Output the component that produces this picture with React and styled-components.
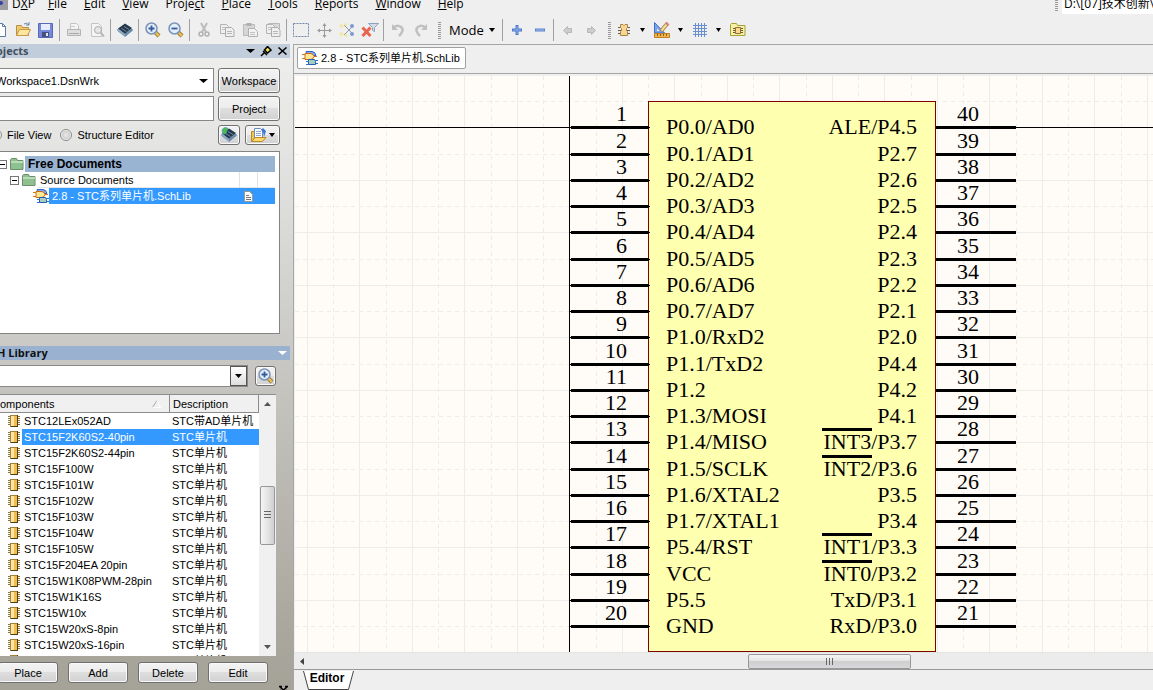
import React from "react";
import styled, { createGlobalStyle, css } from "styled-components";

const Global = createGlobalStyle`
  * { box-sizing: border-box; }
  html, body { margin: 0; height: 100%; }
  body {
    overflow: hidden;
    background: #efefef;
    color: #000;
    font: 11px/16px "Liberation Sans", "Noto Sans CJK SC", sans-serif;
  }
  button, input, select { font: inherit; color: inherit; margin: 0; }
  svg { display: block; flex: none; }
`;

const Page = styled.div`
  display: flex;
  flex-direction: column;
  height: 100vh;
  overflow: hidden;
`;

/* ---------- menu and toolbar ---------- */

const MenuBar = styled.nav`
  display: flex;
  flex: none;
  height: 18px;
  overflow: hidden;
  font: 12px/18px "Open Sans", "Noto Sans CJK SC", sans-serif;
`;

const AppBadge = styled.span`
  display: flex;
  width: 8px;
  height: 10px;
  background: #9d9ca2;
  margin-right: 4px;
`;

const MenuList = styled.div`
  display: flex;
  flex: 1;
  gap: 17px;
  margin-top: -5px;
`;

const MenuItem = styled.button`
  border: 0;
  padding: 0;
  background: none;
  height: 18px;
  white-space: nowrap;
  &:first-child { margin-right: -4px; }
`;

const PathBox = styled.input`
  width: 91px;
  height: 22px;
  margin: -8px 0 0 3px;
  padding: 0 0 0 2px;
  border: 0;
  background: #fff;
`;

const Toolbar = styled.div`
  display: flex;
  flex: none;
  align-items: center;
  height: 26px;
  padding-bottom: 2px;
  margin-left: -12px;
`;

const ToolButton = styled.button`
  display: flex;
  flex: none;
  align-items: center;
  justify-content: center;
  width: 23px;
  height: 22px;
  padding: 0;
  border: 0;
  background: none;
`;

const CaretButton = styled(ToolButton)`
  width: 15px;
`;

const ModeButton = styled.button`
  display: flex;
  align-items: center;
  gap: 5px;
  width: 58px;
  padding: 0 0 0 7px;
  border: 0;
  background: none;
  font: 13px/18px "Open Sans", sans-serif;
`;

const Separator = styled.span`
  flex: none;
  width: 1px;
  height: 22px;
  margin: 0 2px;
  background: #a0a0a0;
`;

const Grip = styled.span`
  flex: none;
  width: 3px;
  height: ${(p) => p.$h || 17}px;
  margin: 0 1px 0 6px;
  background: repeating-linear-gradient(#999 0 1px, #efefef 1px 2px);
`;

/* ---------- side panels ---------- */

const Body = styled.div`
  display: flex;
  flex: 1;
  min-height: 0;
`;

const Side = styled.aside`
  display: flex;
  flex-direction: column;
  flex: none;
  width: 303px;
  margin-left: -10px;
  padding-right: 3px;
  background: linear-gradient(#efefee, #dededc 24%, #c9c8c4 48%, #aaa79e 90%, #a5a298);
`;

const PanelHeader = styled.header`
  display: flex;
  flex: none;
  align-items: center;
  height: 14px;
  padding: 0 0 0 ${(p) => (p.$active ? 7 : 6)}px;
  background: ${(p) => (p.$active ? "#9ab2cf" : "#c1cddb")};
  color: ${(p) => (p.$active ? "#111" : "#42505e")};
  font: bold 11px/14px "Open Sans", sans-serif;
`;

const PanelTitle = styled.h2`
  flex: 1;
  margin: 0;
  font: inherit;
`;

const HeaderButton = styled.button`
  display: flex;
  justify-content: center;
  width: 16px;
  padding: 0;
  border: 0;
  background: none;
`;

const PanelBody = styled.section`
  display: flex;
  flex-direction: column;
  ${(p) => (p.$fill ? css`flex: 1; min-height: 0; padding: 5px 0 7px;` : css`flex: none; padding: 10px 0 12px;`)}
`;

const FieldRow = styled.div`
  display: flex;
  align-items: center;
  gap: ${(p) => p.$gap || 4}px;
  padding-right: ${(p) => p.$right || 10}px;
  padding-left: ${(p) => p.$left || 0}px;
  margin-bottom: ${(p) => p.$below || 0}px;
`;

const SelectWrap = styled.label`
  position: relative;
  display: flex;
  flex: 1;
`;

const fieldBox = css`
  flex: 1;
  width: 100%;
  min-width: 0;
  height: ${(p) => p.$h || 25}px;
  padding: 0 5px;
  border: 1px solid #888;
  border-radius: 0;
  background: #fff;
`;

const Select = styled.select`
  ${fieldBox}
  appearance: none;
`;

const TextBox = styled.input`
  ${fieldBox}
`;

const DropMark = styled.span`
  position: absolute;
  right: 1px;
  top: 1px;
  bottom: 1px;
  display: flex;
  align-items: center;
  justify-content: center;
  width: ${(p) => (p.$boxed ? 17 : 19)}px;
  pointer-events: none;
  ${(p) => p.$boxed && css`border: 1px solid #555; background: linear-gradient(#fff, #ddd);`}
`;

const PushButton = styled.button`
  display: flex;
  flex: none;
  align-items: center;
  justify-content: center;
  gap: 2px;
  width: ${(p) => p.$w}px;
  height: ${(p) => p.$h || 21}px;
  padding: 0;
  border: 1px solid #707070;
  border-radius: 3px;
  box-shadow: inset 0 0 0 1px #fafafa;
  background: linear-gradient(#f3f3f3, #ececec 49%, #dedede 50%, #d2d2d2);
`;

const ViewChoices = styled.div`
  display: flex;
  flex: 1;
  gap: 9px;
`;

const RadioLabel = styled.label`
  display: flex;
  align-items: center;
  gap: 5px;
  white-space: nowrap;
`;

const Radio = styled.input`
  appearance: none;
  width: 12px;
  height: 12px;
  border: 1px solid #8a8a8a;
  border-radius: 50%;
  background: radial-gradient(#e2e2e2 20%, #cfcfcf 50%, #f8f8f8 70%);
`;

const Grow = styled.span`
  flex: 1;
`;

const Tree = styled.ul`
  height: 183px;
  margin: 0 10px 0 0;
  padding: 4px 4px 0 7px;
  list-style: none;
  background: #fff;
  border: 1px solid #848484;
`;

const TreeRow = styled.li`
  display: flex;
  align-items: center;
  height: 16px;
  gap: ${(p) => (p.$level === 2 ? 0 : 1)}px;
  padding-left: ${(p) => [0, 12, 35][p.$level]}px;
`;

const TreeLabel = styled.span`
  display: flex;
  flex: 1;
  align-items: center;
  height: 16px;
  padding-left: 3px;
  white-space: nowrap;
  ${(p) => p.$kind === "root" && css`background: #99b3d2; font-size: 12px; font-weight: bold;`}
  ${(p) => p.$kind === "selected" && css`background: #3399ff; color: #fff;`}
  ${(p) => p.$kind === "group" && css`border-bottom: 1px solid #e6e6e6;`}
`;

const TreeCell = styled.span`
  display: flex;
  align-items: center;
  justify-content: center;
  width: 18px;
  height: 16px;
  border-left: 1px solid ${(p) => (p.$plain ? "transparent" : "#e2e2e2")};
`;

const ListFrame = styled.div`
  display: flex;
  flex: 1;
  min-height: 0;
  margin: 0 14px 6px 0;
  overflow: hidden;
  border-top: 1px solid #8c8c8c;
  background: #fff;
`;

const ListClip = styled.div`
  flex: 1;
  overflow: hidden;
`;

const Table = styled.table`
  width: 100%;
  table-layout: fixed;
  border-collapse: separate;
  border-spacing: 0;
`;

const Th = styled.th`
  height: 18px;
  padding: 0 8px 0 ${(p) => p.$pad}px;
  text-align: left;
  font-weight: normal;
  background: #f0f0f0;
  border-right: 1px solid #8c8c8c;
  border-bottom: 1px solid #8c8c8c;
`;

const ThInner = styled.span`
  display: flex;
  align-items: center;
  justify-content: space-between;
`;

const Td = styled.td`
  height: 16px;
  line-height: 16px;
  padding: 0 0 0 ${(p) => p.$pad || 2}px;
  overflow: hidden;
  white-space: nowrap;
  ${(p) => p.$on && css`background: #3399ff; color: #fff;`}
`;

const VScroll = styled.div`
  display: flex;
  flex-direction: column;
  align-items: center;
  flex: none;
  width: 17px;
  padding: 7px 0;
  background: #f0f0f0;
`;

const VThumb = styled.div`
  display: flex;
  align-items: center;
  justify-content: center;
  width: 15px;
  height: 59px;
  border: 1px solid #979797;
  border-radius: 2px;
  background: linear-gradient(90deg, #f5f5f5, #e4e4e4 50%, #cfcfd2);
`;

const Spacer = styled.div`
  flex: ${(p) => p.$n};
`;

const Corner = styled.div`
  align-self: flex-end;
  height: 0;
  margin-right: 2px;
`;

/* ---------- editor ---------- */

const Editor = styled.main`
  display: flex;
  flex: 1;
  flex-direction: column;
  min-width: 0;
  border-top: 1px solid #a6a6a6;
  border-left: 1px solid #a6a6a6;
`;

const TabBar = styled.div`
  display: flex;
  flex: none;
  height: 29px;
  padding: 2px 3px 4px;
  border-bottom: 1px solid #a6a6a6;
`;

const DocTab = styled.button`
  display: flex;
  align-items: center;
  gap: 3px;
  width: 169px;
  padding: 0 0 0 4px;
  border: 1px solid #a0a0a0;
  border-radius: 2px;
  background: #fff;
  white-space: nowrap;
`;

const Sheet = styled.div`
  flex: 1;
  min-height: 0;
  margin: 2px 0 0 1px;
  overflow: hidden;
  background: #fffcf7;
`;

const HScroll = styled.div`
  display: flex;
  flex: none;
  align-items: center;
  height: 17px;
  padding-left: 6px;
  background: #ececec;
  border-top: 1px solid #e2e6e4;
`;

const HThumb = styled.div`
  display: flex;
  align-items: center;
  justify-content: center;
  width: 163px;
  height: 15px;
  border: 1px solid #979797;
  border-radius: 2px;
  background: linear-gradient(#f5f5f5, #e2e2e2 49%, #cfcfd2 50%, #d8d8da);
`;

const Footer = styled.footer`
  flex: none;
  height: 21px;
  padding-left: 9px;
  border-top: 1px solid #999;
`;

const EditorTab = styled.button`
  position: relative;
  z-index: 0;
  width: 52px;
  height: 19px;
  padding: 0 4px 4px 0;
  border: 0;
  background: none;
  font-size: 12px;
  font-weight: bold;
  line-height: 14px;
  svg { position: absolute; left: 0; top: 0; z-index: -1; }
`;

/* ---------- icons ---------- */

const Svg = ({ w = 16, h = 16, children }) => (
  <svg width={w} height={h} viewBox={`0 0 ${w} ${h}`} fill="none" aria-hidden="true">
    {children}
  </svg>
);

const Down = ({ color = "#000", w = 7 }) => (
  <Svg w={w} h={4}>
    <path d={`M0 0H${w}L${w / 2} 4Z`} fill={color} />
  </Svg>
);

const Lens = ({ minus }) => (
  <Svg>
    <path d="M10 10l4 4" stroke="#7b6a3c" strokeWidth="4" />
    <path d="M10.500 10.500l3.500 3.500" stroke="#eebc4d" strokeWidth="2.500" />
    <circle cx="6.500" cy="6.500" r="5.500" fill="#e3eefb" stroke="#7b93b8" strokeWidth="1.500" />
    <path d={minus ? "M3.500 6.500h6" : "M3.500 6.500h6M6.500 3.500v6"} stroke="#365a9c" strokeWidth="1.800" />
  </Svg>
);

const Gate = () => (
  <Svg>
    <path d="M4 1.500h6q3 0 4 4H5z" fill="#7fa9f0" stroke="#3465c4" />
    <path d="M0 4.500h4M0 8.500h4M12 6.500h3" stroke="#d9771a" />
    <path d="M3 3.500h6q3 1 3 3t-3 3H3z" fill="#ffe794" stroke="#cf6a10" />
    <path d="M6.500 9.500h6l1 2v3h-7z" fill="#a5cfbd" stroke="#2b5cab" />
    <path d="M13 10.500h3M13.500 13.500h2.500M4 11.500h3M4 14.500h3" stroke="#2b6fe0" />
  </Svg>
);

const Chip = () => (
  <Svg w={12} h={14}>
    <path d="M0 2.500h12M0 4.500h12M0 6.500h12M0 8.500h12M0 10.500h12" stroke="#8a7440" />
    <rect x="2.500" y="1.500" width="7" height="11" fill="#f2bd4c" stroke="#a58238" />
    <rect x="3" y="2" width="3" height="10" fill="#fde5a2" />
    <path d="M9.500 1v12M3 12.500h6" stroke="#4d3a12" />
  </Svg>
);

const ToolChip = () => (
  <Svg>
    <path d="M2 5.500h12M2 8.500h12M2 11.500h12" stroke="#6c5b41" />
    <path d="M4.500 2.500h2.500l1 1 1-1h2.500v3l-1 1v2l1 1v4h-7v-4l1-1v-2l-1-1z" fill="#f7d690" stroke="#a8854a" />
  </Svg>
);

const Folder = () => (
  <Svg w={14} h={12}>
    <path d="M.5 11.500v-10l1-1h5l1 2h5.500v9z" fill="#8fc08f" stroke="#6b8f6c" />
    <path d="M1 3h12v2H1z" fill="#b9dcb7" />
  </Svg>
);

const Box = () => (
  <Svg w={11} h={9}>
    <rect x=".5" y=".5" width="8" height="8" fill="#fff" stroke="#777" />
    <path d="M2 4.500h5" stroke="#000" />
  </Svg>
);

const Layers = ({ globe }) => (
  <Svg>
    <path d="M0 8l8-4 8 4-8 6z" fill="#b9cde0" stroke="#8aa5c0" />
    <path d="M1 6.500l7-5 7 4.500-7 6z" fill="#25394d" />
    <path d="M1 7l7 5v3L1 9.500z" fill="#8ba7c2" />
    <path d="M8 12l7-6v3l-7 6z" fill="#6c8ba9" />
    <path d="M4.500 6.500l5 3M7 4.500l5 3" stroke="#71869b" />
    {globe && <path d="M1 4a3.500 3.500 0 016-2.500L5 7H2z" fill="#4dbd4d" stroke="#3b83d6" strokeWidth=".5" />}
  </Svg>
);

const Pages = ({ n = 2 }) => (
  <Svg>
    {n === 3 && <path d="M3.500 1.500h11v10h-11z" fill="#d8d8d8" stroke="#b8b8b8" />}
    <path d="M1.500 2.500h6l2 2v7h-8z" fill="#efefef" stroke="#b3b3b3" />
    <path d="M3 5.500h4M3 7.500h4" stroke="#c3c3c3" />
    <path d="M6.500 5.500h6l2.500 2.500v6.500H6.500z" fill="#efefef" stroke="#adadad" />
    <path d="M8 9.500h5M8 11.500h5" stroke="#b9b9b9" />
  </Svg>
);

const Icons = {
  newDoc: (
    <Svg>
      <path d="M3.500 1.500h7l3 3v10h-10z" fill="#fff" stroke="#597ba6" />
      <path d="M10.500 1.500v3h3" stroke="#597ba6" />
    </Svg>
  ),
  open: (
    <Svg>
      <path d="M1.500 13.500v-10h5l1 2h6v8z" fill="#f0ca72" stroke="#b99142" />
      <path d="M1.500 13.500l3-6h11l-3 6z" fill="#ffe5a0" stroke="#c59b45" />
      <path d="M9 2q3-2 5 1M14 0v3h-3" stroke="#6587b5" />
    </Svg>
  ),
  save: (
    <Svg w={15} h={15}>
      <path d="M.5.500h14v14H.5z" fill="#7587d8" stroke="#5969b5" />
      <path d="M3 1h9v6H3z" fill="#e7ecfb" />
      <path d="M4 9h7v5H4z" fill="#454f82" />
      <path d="M8 10h2v3H8z" fill="#e6e6e6" />
    </Svg>
  ),
  print: (
    <Svg>
      <path d="M4.500 7V1.500h6l2 2V7" fill="#f4f4f4" stroke="#c4c4c4" />
      <path d="M1.500 7.500h13v6h-13z" fill="#dedede" stroke="#b4b4b4" />
      <path d="M3 11.500h10" stroke="#a8a8a8" />
      <path d="M4 4.500h5" stroke="#ccc" />
    </Svg>
  ),
  preview: (
    <Svg>
      <path d="M2.500 1.500h7l3 3v10h-10z" fill="#f5f5f5" stroke="#c4c4c4" />
      <circle cx="9" cy="8" r="3.500" fill="#e6e6e6" stroke="#adadad" />
      <path d="M11.500 10.500l3.500 4" stroke="#bbb" strokeWidth="2" />
    </Svg>
  ),
  cut: (
    <Svg>
      <path d="M5 1l5 9M11 1L6 10" stroke="#bcbcbc" strokeWidth="2" />
      <circle cx="5" cy="12" r="2" stroke="#b0b0b0" strokeWidth="1.500" />
      <circle cx="11" cy="12" r="2" stroke="#b0b0b0" strokeWidth="1.500" />
    </Svg>
  ),
  paste: (
    <Svg>
      <path d="M1.500 2.500h11v11h-11z" fill="#d6d6d6" stroke="#bababa" />
      <path d="M4.500 1h5v3h-5z" fill="#b0b0b0" />
      <path d="M6.500 6.500h6l3 3v5h-9z" fill="#f2f2f2" stroke="#b0b0b0" />
      <path d="M8 10.500h5M8 12.500h5" stroke="#c2c2c2" />
    </Svg>
  ),
  select: (
    <Svg>
      <rect x=".5" y="1.500" width="15" height="13" stroke="#6f86a6" strokeDasharray="2 1" />
    </Svg>
  ),
  move: (
    <Svg>
      <path d="M8.500 2v12M2 8.500h13" stroke="#999" />
      <path d="M8.500 1l-2 3h4zM8.500 16l-2-3h4zM1 8.500l3-2v4zM16 8.500l-3-2v4z" fill="#999" />
    </Svg>
  ),
  wires: (
    <Svg>
      <path d="M5 3l6 6 3 3M5 13l8-8" stroke="#8d9aab" />
      <circle cx="2.500" cy="4" r="2" fill="#efe9a7" />
      <circle cx="2.500" cy="12" r="2" fill="#efe9a7" />
      <circle cx="7" cy="2.500" r="1.500" fill="#efe9a7" />
      <circle cx="7" cy="13.500" r="1.500" fill="#efe9a7" />
      <circle cx="13" cy="4" r="2" fill="#7e9bd0" />
      <circle cx="13" cy="12" r="2" fill="#7e9bd0" />
    </Svg>
  ),
  clear: (
    <Svg w={18}>
      <path d="M7.500 1.500h10l-4 4v4l-2-1v-3z" fill="#d2deea" stroke="#8da3bb" />
      <path d="M1.500 5.500l8 8.500M9.500 5.500L1.500 14" stroke="#e9644e" strokeWidth="3" />
    </Svg>
  ),
  undo: (
    <Svg>
      <path d="M3 6q4-4 8-1t-2 9" stroke="#c0c0c0" strokeWidth="2.500" />
      <path d="M2 2v6h6z" fill="#c0c0c0" />
    </Svg>
  ),
  redo: (
    <Svg>
      <path d="M13 6Q9 2 5 5t2 9" stroke="#c0c0c0" strokeWidth="2.500" />
      <path d="M14 2v6H8z" fill="#c0c0c0" />
    </Svg>
  ),
  plus: (
    <Svg>
      <path d="M8 3v10M3 8h10" stroke="#4f79ca" strokeWidth="3" />
      <path d="M8 4v8M4 8h8" stroke="#8db0ee" />
    </Svg>
  ),
  minus: (
    <Svg>
      <path d="M3 8h10" stroke="#5b82cc" strokeWidth="3" />
      <path d="M4 8h8" stroke="#9dbcf2" />
    </Svg>
  ),
  left: (
    <Svg>
      <path d="M3.500 8.500l4-4v2h4v4h-4v2z" fill="#ccc" stroke="#b8b8b8" />
    </Svg>
  ),
  right: (
    <Svg>
      <path d="M12.500 8.500l-4-4v2h-4v4h4v2z" fill="#ccc" stroke="#b8b8b8" />
    </Svg>
  ),
  draft: (
    <Svg w={17}>
      <path d="M1.500.500l10 10.500h-10z" fill="#7da5ea" stroke="#3f6fca" />
      <path d="M4 6.500L6.500 9H4z" fill="#efefef" />
      <path d="M1.500 11.500h15v4h-15z" fill="#efb650" stroke="#bd7f23" />
      <path d="M4.500 12v2M7.500 12v2M10.500 12v2M13.500 12v2" stroke="#8b5a14" />
      <path d="M8 9l6-7" stroke="#a4864e" strokeWidth="4" />
      <path d="M8.500 8.500l5-6" stroke="#f6df99" strokeWidth="2" />
      <path d="M13.500 2.500l1.500-1.500" stroke="#d9827d" strokeWidth="4" />
    </Svg>
  ),
  grid: (
    <Svg>
      <path d="M1 3.500h14M1 6.500h14M1 9.500h14M1 12.500h14M3.500 1v14M6.500 1v14M9.500 1v14M12.500 1v14" stroke="#6990cc" />
    </Svg>
  ),
  folderChip: (
    <Svg>
      <path d="M.5 13.500v-11l1-1h5l1 2h7.500v10z" fill="#f6f1a4" stroke="#a5a233" />
      <path d="M3 6.500h10M3 8.500h10M3 10.500h10" stroke="#725a30" />
      <path d="M5.500 5.500h5v6h-5z" fill="#fbd98e" stroke="#8f713b" />
    </Svg>
  ),
  openPage: (
    <Svg w={17}>
      <path d="M1.500 14.500v-10h5v10z" fill="#f3c44b" stroke="#b9892a" />
      <path d="M4.500 1.500h6l2 2v8h-8z" fill="#fff" stroke="#6a8fc7" />
      <path d="M6 4.500h5M6 6.500h5M6 8.500h5" stroke="#89a5d0" />
      <path d="M2 14.500l3-4h11l-3.500 4z" fill="#ffd970" stroke="#b9892a" />
      <path d="M11 3l2-2 3 3-2 6-1-5z" fill="#3c78d8" />
    </Svg>
  ),
  pin: (
    <Svg w={12} h={11}>
      <path d="M1 10l3-3M3 5l4 4M4.500 4l3-3.500 3.500 3.500-3.500 3z" stroke="#000" strokeWidth="1.500" fill="#eadf4e" />
    </Svg>
  ),
  close: (
    <Svg w={9} h={8}>
      <path d="M.5.500l8 7M8.500.500l-8 7" stroke="#000" strokeWidth="1.500" />
    </Svg>
  ),
  page: (
    <Svg w={9} h={11}>
      <path d="M.5.500h5l3 3v7h-8z" fill="#fff" stroke="#999" />
      <path d="M2 4.500h3M2 6.500h5M2 8.500h5" stroke="#777" />
    </Svg>
  ),
};

/* ---------- data ---------- */

const menus = [
  ["D", "X", "P"], ["", "F", "ile"], ["", "E", "dit"], ["", "V", "iew"], ["Proje", "c", "t"],
  ["", "P", "lace"], ["", "T", "ools"], ["", "R", "eports"], ["", "W", "indow"], ["", "H", "elp"],
];

const tools = [
  ["New", Icons.newDoc], ["Open", Icons.open], ["Save", Icons.save], null,
  ["Print", Icons.print], ["Preview", Icons.preview], null,
  ["Devices", <Layers />], null,
  ["Zoom in", <Lens />], ["Zoom out", <Lens minus />], null,
  ["Cut", Icons.cut], ["Copy", <Pages />], ["Paste", Icons.paste], ["Paste array", <Pages n={3} />], null,
  ["Select", Icons.select], ["Move", Icons.move], ["Deselect", Icons.wires], ["Clear filter", Icons.clear], null,
  ["Undo", Icons.undo], ["Redo", Icons.redo],
];

const parts = [
  "STC12LEx052AD", "STC15F2K60S2-40pin", "STC15F2K60S2-44pin", "STC15F100W", "STC15F101W",
  "STC15F102W", "STC15F103W", "STC15F104W", "STC15F105W", "STC15F204EA 20pin",
  "STC15W1K08PWM-28pin", "STC15W1K16S", "STC15W10x", "STC15W20xS-8pin", "STC15W20xS-16pin",
  "STC15W40xS",
];

const leftPins = [
  "P0.0/AD0", "P0.1/AD1", "P0.2/AD2", "P0.3/AD3", "P0.4/AD4", "P0.5/AD5", "P0.6/AD6", "P0.7/AD7",
  "P1.0/RxD2", "P1.1/TxD2", "P1.2", "P1.3/MOSI", "P1.4/MISO", "P1.5/SCLK", "P1.6/XTAL2",
  "P1.7/XTAL1", "P5.4/RST", "VCC", "P5.5", "GND",
];

const rightPins = [
  "ALE/P4.5", "P2.7", "P2.6", "P2.5", "P2.4", "P2.3", "P2.2", "P2.1", "P2.0", "P4.4", "P4.2", "P4.1",
  "INT3/P3.7", "INT2/P3.6", "P3.5", "P3.4", "INT1/P3.3", "INT0/P3.2", "TxD/P3.1", "RxD/P3.0",
];

/* ---------- schematic drawing ---------- */

const PinText = styled.text`
  font: 22px "Liberation Serif", serif;
  fill: #000;
`;

const ORIGIN_X = 274;
const ORIGIN_Y = 51;
const PITCH = 26.25;
const step = (i) => Math.ceil(i * PITCH);

function GridLines() {
  const lines = [];
  for (let i = -10; i < 80; i++) {
    const x = ORIGIN_X + step(i) + 0.5;
    lines.push(
      <line key={"v" + i} x1={x} x2={x} y1="0" y2="100%" stroke="#ecece8" strokeDasharray={i % 2 ? "4 4" : undefined} />
    );
  }
  for (let i = -1; i < 50; i++) {
    const y = ORIGIN_Y + step(i) + 0.5;
    lines.push(
      <line key={"h" + i} y1={y} y2={y} x1="0" x2="100%" stroke="#ecece8" strokeDasharray={i % 2 ? "4 4" : undefined} />
    );
  }
  return lines;
}

function Schematic() {
  return (
    <svg width="100%" height="100%" role="img" aria-label="STC15F2K60S2-40pin">
      <GridLines />
      <path d={`M${ORIGIN_X + 0.5} 0V2000M0 ${ORIGIN_Y + 0.5}H4000`} stroke="#000" />
      <rect x="353.5" y="25.5" width="287" height="550" fill="#ffffb0" stroke="#800000" />
      {leftPins.map((name, i) => {
        const y = ORIGIN_Y + step(i);
        return (
          <g key={name}>
            <rect x="276" y={y - 1} width="78" height="3" />
            <rect x="274" y={y} width="81" height="1" />
            <PinText x="332" y={y - 6} textAnchor="end">{i + 1}</PinText>
            <PinText x="371" y={y + 7}>{name}</PinText>
          </g>
        );
      })}
      {rightPins.map((name, i) => {
        const y = ORIGIN_Y + step(i);
        return (
          <g key={name}>
            <rect x="641" y={y - 1} width="80" height="3" />
            <PinText x="662" y={y - 6}>{40 - i}</PinText>
            <PinText x="622" y={y + 7} textAnchor="end">{name}</PinText>
            {name.startsWith("INT") && <rect x="527" y={y - 14} width="50" height="3" />}
          </g>
        );
      })}
    </svg>
  );
}

/* ---------- application ---------- */

function TopBars() {
  return (
    <>
      <MenuBar>
        <AppBadge><Svg w={8} h={10}><circle cx="1" cy="3" r="2" fill="#3344a8" /></Svg></AppBadge>
        <MenuList>
          {menus.map(([a, k, b]) => (
            <MenuItem key={a + k + b}>{a}<u>{k}</u>{b}</MenuItem>
          ))}
        </MenuList>
        <Grip $h={12} />
        <PathBox aria-label="Path" defaultValue={"D:\\[07]技术创新\\"} />
      </MenuBar>
      <Toolbar>
        {tools.map((t, i) =>
          t ? <ToolButton key={t[0]} aria-label={t[0]}>{t[1]}</ToolButton> : <Separator key={i} />
        )}
        <Grip />
        <ModeButton>Mode <Down w={6} /></ModeButton>
        <Separator />
        <ToolButton aria-label="Add mode">{Icons.plus}</ToolButton>
        <ToolButton aria-label="Remove mode">{Icons.minus}</ToolButton>
        <Separator />
        <ToolButton aria-label="Previous">{Icons.left}</ToolButton>
        <ToolButton aria-label="Next">{Icons.right}</ToolButton>
        <Grip />
        <ToolButton aria-label="IEEE symbols"><ToolChip /></ToolButton>
        <CaretButton aria-label="Symbol list"><Down w={5} /></CaretButton>
        <ToolButton aria-label="Drafting">{Icons.draft}</ToolButton>
        <CaretButton aria-label="Drafting list"><Down w={5} /></CaretButton>
        <ToolButton aria-label="Grids">{Icons.grid}</ToolButton>
        <CaretButton aria-label="Grid list"><Down w={5} /></CaretButton>
        <ToolButton aria-label="Model manager">{Icons.folderChip}</ToolButton>
      </Toolbar>
    </>
  );
}

function ProjectsPanel() {
  return (
    <>
      <PanelHeader>
        <PanelTitle>ojects</PanelTitle>
        <HeaderButton aria-label="Panel menu"><Down w={9} /></HeaderButton>
        <HeaderButton aria-label="Pin">{Icons.pin}</HeaderButton>
        <HeaderButton aria-label="Close">{Icons.close}</HeaderButton>
      </PanelHeader>
      <PanelBody>
        <FieldRow $below={3}>
          <SelectWrap>
            <Select aria-label="Workspace file"><option>Workspace1.DsnWrk</option></Select>
            <DropMark><Down w={9} /></DropMark>
          </SelectWrap>
          <PushButton $w={62} $h={25}>Workspace</PushButton>
        </FieldRow>
        <FieldRow $below={4}>
          <TextBox aria-label="Project file" />
          <PushButton $w={62} $h={25}>Project</PushButton>
        </FieldRow>
        <FieldRow $below={6} $gap={5}>
          <ViewChoices>
            <RadioLabel><Radio type="radio" name="view" />File View</RadioLabel>
            <RadioLabel><Radio type="radio" name="view" />Structure Editor</RadioLabel>
          </ViewChoices>
          <PushButton $w={22} $h={20} aria-label="Devices"><Layers globe /></PushButton>
          <PushButton $w={35} $h={20} aria-label="Open page">{Icons.openPage}<Down w={6} /></PushButton>
        </FieldRow>
        <Tree>
          <TreeRow $level={0}><Box /><Folder /><TreeLabel $kind="root">Free Documents</TreeLabel></TreeRow>
          <TreeRow $level={1}>
            <Box /><Folder />
            <TreeLabel $kind="group">Source Documents<Grow /><TreeCell /><TreeCell /></TreeLabel>
          </TreeRow>
          <TreeRow $level={2}>
            <Gate />
            <TreeLabel $kind="selected">
              2.8 - STC系列单片机.SchLib<Grow /><TreeCell $plain>{Icons.page}</TreeCell><TreeCell $plain />
            </TreeLabel>
          </TreeRow>
        </Tree>
      </PanelBody>
    </>
  );
}

function LibraryPanel() {
  return (
    <>
      <PanelHeader $active>
        <PanelTitle>H Library</PanelTitle>
        <HeaderButton aria-label="Panel menu"><Down w={9} color="#fff" /></HeaderButton>
      </PanelHeader>
      <PanelBody $fill>
        <FieldRow $below={7} $gap={7} $right={14}>
          <SelectWrap>
            <Select $h={22} aria-label="Filter"><option /></Select>
            <DropMark $boxed><Down /></DropMark>
          </SelectWrap>
          <PushButton $w={21} $h={20} aria-label="Search"><Lens /></PushButton>
        </FieldRow>
        <ListFrame>
          <ListClip>
            <Table>
              <colgroup><col width="32" /><col width="148" /><col /></colgroup>
              <thead>
                <tr>
                  <Th colSpan={2} $pad={10}>
                    <ThInner>omponents <Svg w={9} h={8}><path d="M.5 7.500L5 .5" stroke="#aaa" /><path d="M5 .5l3.500 7h-8" stroke="#fff" /></Svg></ThInner>
                  </Th>
                  <Th $pad={3}>Description</Th>
                </tr>
              </thead>
              <tbody>
                {parts.map((name, i) => (
                  <tr key={name}>
                    <Td $pad={18}><Chip /></Td>
                    <Td $on={i === 1}>{name}</Td>
                    <Td $on={i === 1}>{i === 0 ? "STC带AD单片机" : "STC单片机"}</Td>
                  </tr>
                ))}
              </tbody>
            </Table>
          </ListClip>
          <VScroll>
            <Svg w={7} h={4}><path d="M0 4h7L3.500 0z" fill="#555" /></Svg>
            <Spacer $n={80} />
            <VThumb><Svg w={7} h={8}><path d="M0 .5h7M0 3.500h7M0 6.500h7" stroke="#666" /></Svg></VThumb>
            <Spacer $n={101} />
            <Down color="#555" />
          </VScroll>
        </ListFrame>
        <FieldRow $gap={10} $left={8}>
          <PushButton $w={60}>Place</PushButton>
          <PushButton $w={60}>Add</PushButton>
          <PushButton $w={60}>Delete</PushButton>
          <PushButton $w={60}>Edit</PushButton>
        </FieldRow>
        <Corner>
          <Svg w={9} h={10}><path d="M0 3.500h3M6 3.500h3M1 4l3.500 3L8 4M1 7l3.500 3L8 7" stroke="#000" strokeWidth="1.500" /></Svg>
        </Corner>
      </PanelBody>
    </>
  );
}

export default function App() {
  return (
    <Page>
      <Global />
      <TopBars />
      <Body>
        <Side>
          <ProjectsPanel />
          <LibraryPanel />
        </Side>
        <Editor>
          <TabBar>
            <DocTab><Gate />2.8 - STC系列单片机.SchLib</DocTab>
          </TabBar>
          <Sheet><Schematic /></Sheet>
          <HScroll>
            <Svg w={4} h={7}><path d="M4 0v7L0 3.500z" fill="#444" /></Svg>
            <Spacer $n={444} />
            <HThumb><Svg w={8} h={7}><path d="M.5 0v7M3.500 0v7M6.500 0v7" stroke="#666" /></Svg></HThumb>
            <Spacer $n={242} />
          </HScroll>
          <Footer>
            <EditorTab>
              <Svg w={52} h={19}><path d="M.5 0l5 18.500h40L50.500 0" fill="#fff" stroke="#444" /></Svg>
              Editor
            </EditorTab>
          </Footer>
        </Editor>
      </Body>
    </Page>
  );
}
